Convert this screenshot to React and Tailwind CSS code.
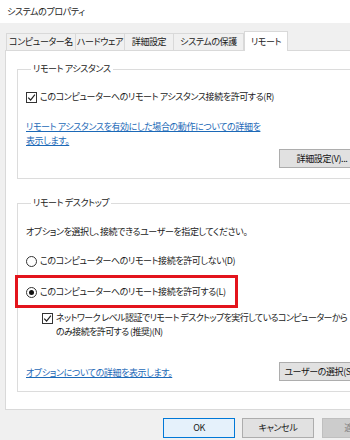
import React from 'react';

const jp = "font-['Noto_Sans_CJK_JP','Noto_Sans',sans-serif] [font-feature-settings:'palt'] tracking-[-0.4px]";

function CheckBox() {
  return (
    <span className="w-[11px] h-[11px] border border-[#333] bg-white flex items-center justify-center shrink-0">
      <svg width="9" height="9" viewBox="0 0 9 9">
        <path d="M1.2 4.6 L3.6 7 L7.9 1.6" fill="none" stroke="#222" strokeWidth="1.2" />
      </svg>
    </span>
  );
}

function Radio({ checked }) {
  return (
    <span className="w-[11px] h-[11px] rounded-full border border-[#333] bg-white flex items-center justify-center shrink-0">
      {checked && <span className="w-[5px] h-[5px] rounded-full bg-[#111]" />}
    </span>
  );
}

function WinButton({ children, className = '' }) {
  return (
    <div className={`h-[19px] border border-[#adadad] bg-[#e1e1e1] flex items-center justify-center text-[9px] text-[#111] whitespace-nowrap ${className}`}>
      {children}
    </div>
  );
}

export default function App() {
  const tabs = [
    { label: "コンピューター名", w: "w-[70px]" },
    { label: "ハードウェア", w: "w-[50px]" },
    { label: "詳細設定", w: "w-[50px]" },
    { label: "システムの保護", w: "w-[71px]" },
  ];

  return (
    <div className={`w-[350px] h-[440px] overflow-hidden bg-[#f0f0f0] text-[#1a1a1a] ${jp}`}>
      <div className="w-[400px]">
        {/* title bar */}
        <div className="h-[23px] bg-white flex items-center pl-[7px] text-[9px] text-[#222]">
          システムのプロパティ
        </div>

        {/* tab strip */}
        <div className="flex items-end pl-[6px] h-[27px] text-[9px] whitespace-nowrap">
          {tabs.map((t) => (
            <div key={t.label} className={`${t.w} h-[17px] border border-[#d9d9d9] border-b-0 -mr-px bg-[#f0f0f0] flex items-center justify-center`}>
              {t.label}
            </div>
          ))}
          <div className="w-[44px] h-[20px] border border-[#d9d9d9] border-b-0 bg-white flex items-center justify-center relative z-10 -mb-px ml-px">
            リモート
          </div>
        </div>

        {/* tab panel */}
        <div className="mx-[5px] bg-white border border-[#d9d9d9] px-[11px] pt-[12px] pb-[17px] text-[9px] leading-[14px]">
          <fieldset className="border border-[#dcdcdc] pl-[8px] pr-[11px] pb-[10px]">
            <legend className="ml-[5px] px-[2px] leading-[12px]">リモート アシスタンス</legend>
            <div className="mt-[15px] flex items-center gap-[3px] h-[14px] whitespace-nowrap">
              <CheckBox />
              <span>このコンピューターへのリモート アシスタンス接続を許可する(R)</span>
            </div>
            <div className="mt-[16px] text-[#1c69b7] underline whitespace-nowrap">
              リモート アシスタンスを有効にした場合の動作についての詳細を<br />表示します。
            </div>
            <div className="flex justify-end mt-px pr-[6px]">
              <WinButton className="w-[86px]">詳細設定(V)...</WinButton>
            </div>
          </fieldset>

          <fieldset className="mt-[18px] border border-[#dcdcdc] pl-[8px] pr-[11px] pb-[10px]">
            <legend className="ml-[5px] px-[2px] leading-[12px]">リモート デスクトップ</legend>
            <div className="mt-[16px] whitespace-nowrap">オプションを選択し、接続できるユーザーを指定してください。</div>
            <div className="mt-[15px] flex items-center gap-[3px] h-[14px] whitespace-nowrap">
              <Radio />
              <span>このコンピューターへのリモート接続を許可しない(D)</span>
            </div>
            <div className="mt-[7px] -ml-[11px] w-[223px] border-[3px] border-[#e3141c] pl-[8px] pt-[7px] pb-[6px]">
              <div className="flex items-center gap-[3px] h-[14px] whitespace-nowrap">
                <Radio checked />
                <span>このコンピューターへのリモート接続を許可する(L)</span>
              </div>
            </div>
            <div className="mt-[3px] pl-[16px] flex items-start gap-[3px]">
              <span className="mt-[2px]"><CheckBox /></span>
              <span className="whitespace-nowrap tracking-[-0.6px]">ネットワーク レベル認証でリモート デスクトップを実行しているコンピューターから<br />のみ接続を許可する (推奨)(N)</span>
            </div>
            <div className="mt-[23px] flex items-center justify-between pr-[6px]">
              <span className="text-[#1c69b7] underline mt-[3px] whitespace-nowrap">オプションについての詳細を表示します。</span>
              <WinButton className="w-[86px]">ユーザーの選択(S)...</WinButton>
            </div>
          </fieldset>
        </div>

        {/* dialog buttons */}
        <div className="flex justify-end gap-[7px] pr-[6px] mt-[8px] text-[9px]">
          <div className="w-[72px] h-[20px] border border-[#0078d7] bg-[#e5f1fb] flex items-center justify-center">OK</div>
          <div className="w-[72px] h-[20px] border border-[#adadad] bg-[#e1e1e1] flex items-center justify-center">キャンセル</div>
          <div className="w-[72px] h-[20px] border border-[#bfbfbf] bg-[#cccccc] flex items-center justify-center text-[#838383] ml-px">適用(A)</div>
        </div>
      </div>
    </div>
  );
}
